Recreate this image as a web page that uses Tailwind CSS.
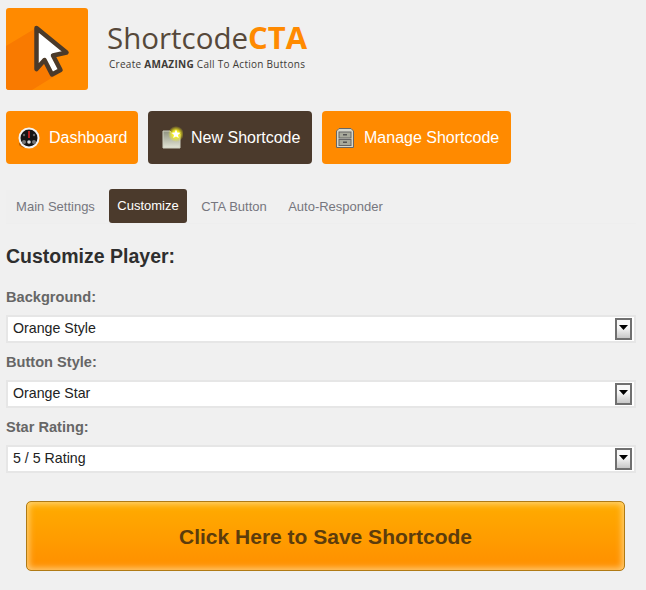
<!DOCTYPE html>
<html>
<head>
<meta charset="utf-8">
<script src="https://cdn.jsdelivr.net/npm/@tailwindcss/browser@4"></script>
</head>
<body class="bg-[#f0f0f0] font-['Liberation_Sans',Arial,sans-serif] w-[646px] h-[590px] overflow-hidden">
<div class="pl-[6px] pr-[10px] pt-[8px]">
  <!-- header -->
  <div class="flex items-start h-[82px]">
    <div class="w-[82px] h-[82px] rounded-[3px] bg-[#ff8a00] overflow-hidden shrink-0">
      <svg width="82" height="82" viewBox="0 0 82 82">
        <path d="M30 20 L0 38 V82 H26 L52 66 Z" fill="#f97a00"/>
        <path d="M30.500 20 L60.500 44.500 L47 47.500 L54.500 62 L46 66.500 L38.500 52 L30.500 61 Z" fill="#fff" stroke="#4b3a2a" stroke-width="4.500" stroke-linejoin="round"/>
      </svg>
    </div>
    <div class="ml-[19px] font-['Open_Sans',sans-serif]">
      <div class="text-[29.500px] leading-[30px] mt-[14px] text-[#56483a]">Shortcode<span class="font-bold text-[31px] leading-[30px] text-[#ff8a00]">CTA</span></div>
      <div class="text-[10px] leading-[13px] mt-[5px] ml-[2px] text-[#3e3a36] tracking-[0.28px]">Create <b>AMAZING</b> Call To Action Buttons</div>
    </div>
  </div>

  <!-- nav buttons -->
  <div class="flex gap-[10px] mt-[21px] text-white text-[16px]">
    <div class="h-[53px] w-[132px] rounded-[4px] bg-[#ff8a00] flex items-center pl-[12px] pt-[1px] gap-[9px]">
      <svg width="22" height="24" viewBox="0 0 22 24" class="shrink-0">
        <ellipse cx="9" cy="18" rx="8" ry="4" fill="#b85f00"/>
        <circle cx="11" cy="12" r="10.500" fill="#f4f4f4"/>
        <circle cx="11" cy="12" r="8.500" fill="#151515"/>
        <circle cx="6" cy="16" r="2" fill="#777"/>
        <circle cx="16" cy="16" r="2" fill="#777"/>
        <circle cx="11" cy="16" r="1.800" fill="#ddd"/>
        <circle cx="6" cy="9" r="1.200" fill="#666"/>
        <circle cx="16" cy="9" r="1.200" fill="#666"/>
        <path d="M11 12 L11 5" stroke="#e22" stroke-width="1.500"/>
      </svg>
      <span>Dashboard</span>
    </div>
    <div class="h-[53px] w-[164px] rounded-[4px] bg-[#4b3a2c] flex items-center pl-[13px] pt-[1px] gap-[8px]">
      <svg width="21" height="24" viewBox="0 0 21 24" class="shrink-0 ml-[1px]">
        <defs>
          <radialGradient id="g"><stop offset="0.400" stop-color="#f6f020"/><stop offset="1" stop-color="#f6f020" stop-opacity="0"/></radialGradient>
          <linearGradient id="f" x1="0" y1="0" x2="0" y2="1"><stop offset="0" stop-color="#8f927f"/><stop offset="1" stop-color="#e3e5d6"/></linearGradient>
        </defs>
        <path d="M1 5 H8 L10 8 H18 V22 H1 Z" fill="url(#f)" stroke="#cfd0c0" stroke-width="1"/>
        <circle cx="14" cy="8" r="8" fill="url(#g)"/>
        <path d="M14 3.500 L15.300 6.500 L18.500 6.800 L16 8.900 L16.800 12 L14 10.400 L11.200 12 L12 8.900 L9.500 6.800 L12.700 6.500 Z" fill="#fff"/>
      </svg>
      <span>New Shortcode</span>
    </div>
    <div class="h-[53px] w-[189px] rounded-[4px] bg-[#ff8a00] flex items-center pl-[14px] pt-[1px] gap-[10px]">
      <svg width="18" height="20" viewBox="0 0 18 20" class="shrink-0">
        <path d="M3 .5 H15 L17.500 3 V19.500 H.5 V3 Z" fill="#d5d6cb" stroke="#666" stroke-width="1"/>
        <rect x="3" y="4" width="12" height="6" fill="#a8aa9c" stroke="#666" stroke-width="1"/>
        <rect x="3" y="11.500" width="12" height="6" fill="#a8aa9c" stroke="#666" stroke-width="1"/>
        <rect x="7" y="6" width="4" height="1.500" fill="#555"/>
        <rect x="7" y="13.500" width="4" height="1.500" fill="#555"/>
      </svg>
      <span>Manage Shortcode</span>
    </div>
  </div>

  <!-- tabs -->
  <div class="flex mt-[25px] h-[35px] pt-[1px] text-[13px] text-[#76767e] border-b border-[#eeeeee] gap-[4px]">
    <div class="w-[99px] flex items-center justify-center bg-[#efefef]">Main Settings</div>
    <div class="w-[78px] flex items-center justify-center rounded-[3px] bg-[#4b3a2c] text-white -mt-[1px]">Customize</div>
    <div class="w-[86px] flex items-center justify-center">CTA Button</div>
    <div class="w-[109px] flex items-center justify-center">Auto-Responder</div>
  </div>

  <h1 class="mt-[20px] text-[19.500px] leading-[24px] font-bold text-[#2e2e2e]">Customize Player:</h1>

  <!-- fields -->
  <div class="mt-[21px] flex flex-col">
    <label class="text-[14.600px] leading-[17px] font-bold text-[#666]">Background:</label>
    <div class="mt-[9px] h-[28px] w-[630px] bg-white border-2 border-[#e6e6e6] flex items-center pl-[5px] pr-[2px] text-[14.200px] text-[#222]">
      <span class="flex-1 -mt-[1px]">Orange Style</span>
      <span class="w-[17px] h-[22px] border-2 border-[#707070] bg-linear-to-b from-[#f8f8f8] from-40% to-[#c8c8c8] flex items-center justify-center">
        <svg width="9" height="6" viewBox="0 0 9 6" class="mb-[3px]"><path d="M0 0 H9 L4.500 5 Z" fill="#000"/></svg>
      </span>
    </div>
    <label class="mt-[11px] text-[14.600px] leading-[17px] font-bold text-[#666]">Button Style:</label>
    <div class="mt-[9px] h-[28px] w-[630px] bg-white border-2 border-[#e6e6e6] flex items-center pl-[5px] pr-[2px] text-[14.200px] text-[#222]">
      <span class="flex-1 -mt-[1px]">Orange Star</span>
      <span class="w-[17px] h-[22px] border-2 border-[#707070] bg-linear-to-b from-[#f8f8f8] from-40% to-[#c8c8c8] flex items-center justify-center">
        <svg width="9" height="6" viewBox="0 0 9 6" class="mb-[3px]"><path d="M0 0 H9 L4.500 5 Z" fill="#000"/></svg>
      </span>
    </div>
    <label class="mt-[11px] text-[14.600px] leading-[17px] font-bold text-[#666]">Star Rating:</label>
    <div class="mt-[9px] h-[28px] w-[630px] bg-white border-2 border-[#e6e6e6] flex items-center pl-[5px] pr-[2px] text-[14.200px] text-[#222]">
      <span class="flex-1 -mt-[1px]">5 / 5 Rating</span>
      <span class="w-[17px] h-[22px] border-2 border-[#707070] bg-linear-to-b from-[#f8f8f8] from-40% to-[#c8c8c8] flex items-center justify-center">
        <svg width="9" height="6" viewBox="0 0 9 6" class="mb-[3px]"><path d="M0 0 H9 L4.500 5 Z" fill="#000"/></svg>
      </span>
    </div>
  </div>

  <!-- save -->
  <div class="mt-[28px] ml-[20px] w-[599px] h-[70px] pt-[1px] rounded-[5px] border border-[#b07a14] bg-linear-to-b from-[#ffac00] to-[#ff8e00] shadow-[inset_0_0_6px_2px_rgba(255,225,160,0.75)] flex items-center justify-center text-[21px] font-bold text-[#5c3c0c]">Click Here to Save Shortcode</div>
</div>
</body>
</html>
